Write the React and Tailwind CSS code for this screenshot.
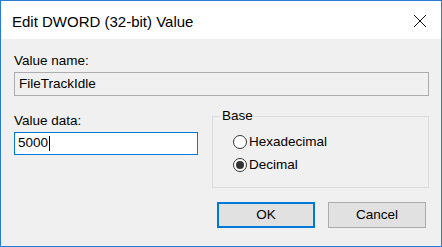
export default function App() {
  const body = { fontFamily: '"Liberation Sans", Arial, sans-serif' };
  return (
    <div className="w-[442px] h-[247px] border border-[#2a7bd3] bg-[#f0f0f0] flex flex-col text-[#000]" style={body}>
      {/* Title bar */}
      <div className="h-[38px] bg-white flex items-center justify-between pl-[11px] pr-[14px]">
        <span className="text-[15px] leading-none text-black mt-[2px]">Edit DWORD (32-bit) Value</span>
        <svg width="14" height="14" viewBox="0 0 14 14" className="mt-[2px]">
          <path d="M1 1 L13 13 M13 1 L1 13" stroke="#111" strokeWidth="1" />
        </svg>
      </div>

      {/* Body */}
      <div className="flex-1 flex flex-col pl-[13px] pr-[12px] pt-[14px] text-[13.5px]">
        <div className="leading-[15px]">Value name:</div>
        <div className="mt-[4px] h-[24px] border border-[#adadad] bg-[#f0f0f0] flex items-center pl-[4px]">
          FileTrackIdle
        </div>

        <div className="flex mt-[16px]">
          <div className="w-[184px] pt-[1px]">
            <div className="leading-[15px]">Value data:</div>
            <div className="mt-[4px] h-[23px] border border-[#0078d7] bg-white flex items-center pl-[3px]">
              5000<span className="inline-block w-px h-[15px] bg-black ml-px" />
            </div>
          </div>

          <div className="ml-[14px] flex-1 relative mt-[4px] h-[72px] border border-[#dcdcdc]">
            <span className="absolute -top-[9px] left-[7px] bg-[#f0f0f0] px-[2px] leading-[15px]">Base</span>
            <div className="flex flex-col gap-[8px] pl-[20px] pt-[17px]">
              <label className="flex items-center gap-[2px] leading-[15px]">
                <span className="w-[14px] h-[14px] rounded-full border border-[#333] bg-white" />
                Hexadecimal
              </label>
              <label className="flex items-center gap-[2px] leading-[15px]">
                <span className="w-[14px] h-[14px] rounded-full border border-[#333] bg-white flex items-center justify-center">
                  <span className="w-[8px] h-[8px] rounded-full bg-[#333]" />
                </span>
                Decimal
              </label>
            </div>
          </div>
        </div>

        <div className="flex justify-end gap-[13px] mt-[14px] pr-[3px]">
          <button className="w-[98px] h-[26px] border-2 border-[#0078d7] bg-[#e1e1e1]">OK</button>
          <button className="w-[98px] h-[26px] border border-[#adadad] bg-[#e1e1e1]">Cancel</button>
        </div>
      </div>
    </div>
  );
}
